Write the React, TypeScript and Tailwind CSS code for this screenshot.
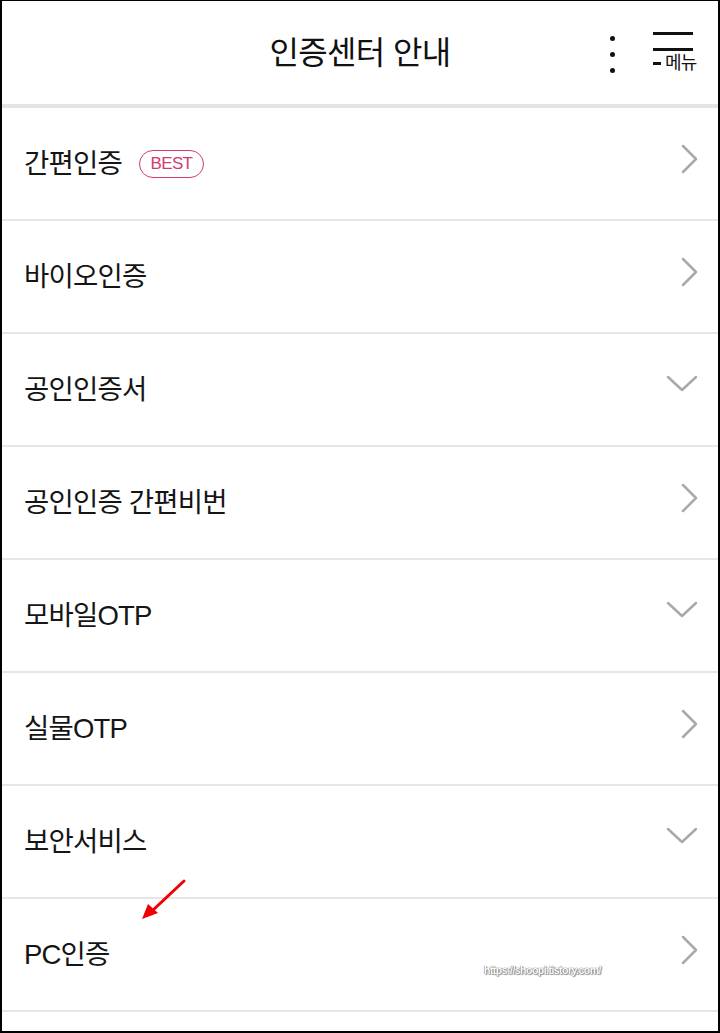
import React from "react";

type Item = { label: string; best?: boolean; down?: boolean };

const items: Item[] = [
  { label: "간편인증", best: true },
  { label: "바이오인증" },
  { label: "공인인증서", down: true },
  { label: "공인인증 간편비번" },
  { label: "모바일OTP", down: true },
  { label: "실물OTP" },
  { label: "보안서비스", down: true },
  { label: "PC인증" },
];

const font = { fontFamily: "'Liberation Sans', 'Noto Sans CJK KR', sans-serif" };

function Chevron({ down }: { down?: boolean }) {
  if (down) {
    return (
      <svg width="32" height="18" viewBox="0 0 32 18" fill="none">
        <path d="M2 2L16 15L30 2" stroke="#a9a9a9" strokeWidth="2.5" strokeLinecap="round" strokeLinejoin="round" />
      </svg>
    );
  }
  return (
    <svg width="18" height="30" viewBox="0 0 18 30" fill="none">
      <path d="M3 2L16 15L3 28" stroke="#a9a9a9" strokeWidth="2.5" strokeLinecap="round" strokeLinejoin="round" />
    </svg>
  );
}

function Row({ item, last }: { item: Item; last?: boolean }) {
  return (
    <div className="relative flex h-[113px] items-center justify-between border-b-2 border-[#e6e6e6] pl-[22px] pr-[20px]">
      <div className="flex items-center gap-[17px]">
        <span className="text-[27.5px] leading-none tracking-[-0.03em] text-[#151515]">{item.label}</span>
        {item.best && (
          <span className="flex h-[28px] w-[65px] items-center justify-center rounded-full border-[1.5px] border-[#d43a72] text-[17px] tracking-[-0.04em] text-[#d43a72]">
            BEST
          </span>
        )}
      </div>
      <div className={item.down ? "mb-[11px]" : "mb-[9px]"}>
        <Chevron down={item.down} />
      </div>
      {last && (
        <>
          <svg className="absolute left-[134px] top-[-22px]" width="54" height="48" viewBox="0 0 54 48" fill="none">
            <path d="M48 4L16 34" stroke="#f00000" strokeWidth="3" strokeLinecap="round" />
            <path d="M6 42L12 27L22 36Z" fill="#f00000" />
          </svg>
          <span
            className="absolute left-[482px] top-[66px] text-[10.5px] font-bold leading-none tracking-[-0.05em] text-white"
            style={{ textShadow: "0 0 1px #666, 0 0 1px #666, 1px 1px 1px #999" }}
          >
            https://shoopi.tistory.com/
          </span>
        </>
      )}
    </div>
  );
}

export default function App() {
  return (
    <div className="h-[1033px] w-[720px] bg-white" style={font}>
      <div className="flex h-full flex-col border-t border-l-2 border-r-2 border-b-2 border-black">
        <header className="relative flex h-[107px] shrink-0 items-center justify-center border-b-4 border-[#e4e4e4]">
          <h1 className="text-[32px] font-normal tracking-[-0.02em] text-[#111]">인증센터 안내</h1>
          <div className="absolute right-[18px] top-[31px] flex items-start gap-[38px]">
            <div className="mt-[4px] flex flex-col gap-[11px]">
              <span className="h-[5px] w-[5px] rounded-full bg-[#111]" />
              <span className="h-[5px] w-[5px] rounded-full bg-[#111]" />
              <span className="h-[5px] w-[5px] rounded-full bg-[#111]" />
            </div>
            <div className="flex w-[47px] flex-col">
              <span className="h-[3px] w-[40px] bg-[#111]" />
              <span className="mt-[13px] h-[3px] w-[40px] bg-[#111]" />
              <div className="mt-[3px] flex items-center gap-[4px]">
                <span className="h-[3px] w-[8px] bg-[#111]" />
                <span className="text-[18px] leading-none tracking-[-0.05em] text-[#111]">메뉴</span>
              </div>
            </div>
          </div>
        </header>
        <div className="flex flex-col">
          {items.map((it, i) => (
            <Row key={it.label} item={it} last={i === items.length - 1} />
          ))}
        </div>
      </div>
    </div>
  );
}
